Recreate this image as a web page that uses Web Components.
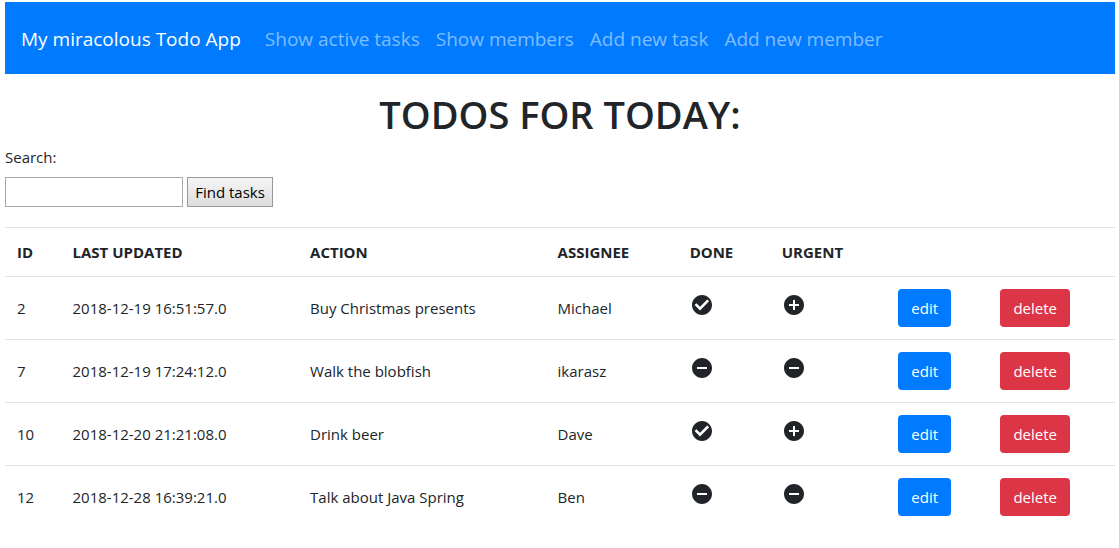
<!DOCTYPE html>
<html lang="en">
<head>
<meta charset="utf-8">
<title>My miracolous Todo App</title>
<style>
  body {
    margin: 2px 4px 0 5px;
    background: #fff;
    color: #212529;
    font: 15px/24px "Open Sans", "Noto Sans", sans-serif;
  }
</style>
</head>
<body>
<todo-app></todo-app>

<script>
  const define = (name, html, setup) => {
    const template = document.createElement('template');
    template.innerHTML = html;
    customElements.define(name, class extends HTMLElement {
      constructor() {
        super();
        this.attachShadow({ mode: 'open' }).append(template.content.cloneNode(true));
      }
      connectedCallback() {
        if (setup) setup(this, this.shadowRoot);
      }
    });
  };

  define('nav-link', `
    <style>
      :host { display: block; }
      a { display: block; padding: 8px; color: rgba(255, 255, 255, .5); text-decoration: none; }
      a:hover { color: rgba(255, 255, 255, .75); }
    </style>
    <a href="#"><slot></slot></a>`);

  define('nav-bar', `
    <style>
      :host { display: block; background: #007bff; font-size: 19px; line-height: 30px; }
      nav { display: flex; flex-wrap: wrap; align-items: center; padding: 14px 16px 12px; }
      .brand { margin-right: 16px; color: #fff; text-decoration: none; }
    </style>
    <nav><a class="brand" href="#"><slot name="brand"></slot></a><slot></slot></nav>`);

  define('task-search', `
    <style>
      :host { display: block; }
      label { display: block; margin-bottom: 8px; }
      .controls { display: flex; gap: 4px; }
      input, button { box-sizing: border-box; height: 30px; border: 1px solid #a9a9a9; font: inherit; }
      input { width: 178px; padding: 1px; }
      button { width: 86px; padding: 0; border-color: #999; background: linear-gradient(#f6f6f6, #dcdcdc); color: #000; white-space: nowrap; }
    </style>
    <form>
      <label for="query">Search:</label>
      <div class="controls"><input id="query" type="text"><button type="button">Find tasks</button></div>
    </form>`);

  const shapes = {
    check: 'M12 2C6.48 2 2 6.48 2 12s4.48 10 10 10 10-4.48 10-10S17.52 2 12 2zm-2 15.4l-5.4-5.4L6.4 10.2 10 13.8l7.2-7.3L19.1 8.300z',
    plus: 'M12 2C6.48 2 2 6.48 2 12s4.48 10 10 10 10-4.48 10-10S17.52 2 12 2zm5 11h-4v4h-2v-4H7v-2h4V7h2v4h4v2z',
    minus: 'M12 2C6.48 2 2 6.48 2 12s4.48 10 10 10 10-4.48 10-10S17.52 2 12 2zm5 11H7v-2h10v2z'
  };

  define('state-icon', `
    <style>
      :host { display: block; width: 24px; height: 24px; }
      svg { display: block; fill: currentColor; }
    </style>
    <svg width="24" height="24" viewBox="0 0 24 24" aria-hidden="true"><path></path></svg>`,
    (host, root) => root.querySelector('path').setAttribute('d', shapes[host.getAttribute('shape')]));

  define('action-button', `
    <style>
      :host { display: block; }
      button {
        display: block; box-sizing: border-box; height: 38px; padding: 0 13px;
        border: 0; border-radius: 4px; background: #007bff; color: #fff; font: inherit; cursor: pointer;
      }
      :host([kind="danger"]) button { background: #dc3545; }
    </style>
    <button type="button"><slot></slot></button>`);

  const tasks = [
    [2, '2018-12-19 16:51:57.0', 'Buy Christmas presents', 'Michael', true, true],
    [7, '2018-12-19 17:24:12.0', 'Walk the blobfish', 'ikarasz', false, false],
    [10, '2018-12-20 21:21:08.0', 'Drink beer', 'Dave', true, true],
    [12, '2018-12-28 16:39:21.0', 'Talk about Java Spring', 'Ben', false, false]
  ];

  define('task-table', `
    <style>
      :host { display: block; }
      table { width: 100%; table-layout: fixed; border-collapse: separate; border-spacing: 0; }
      th, td { padding: 12px 0 12px 12px; border-top: 1px solid #dee2e6; text-align: left; vertical-align: middle; }
      td.state { padding-top: 16px; vertical-align: top; }
      .id { width: 5%; } .updated { width: 21.4%; } .action { width: 22.3%; } .assignee { width: 11.9%; }
      .done { width: 8.3%; } .urgent { width: 10.5%; } .edit { width: 9.2%; }
    </style>
    <table>
      <colgroup><col class="id"><col class="updated"><col class="action"><col class="assignee"><col class="done"><col class="urgent"><col class="edit"><col></colgroup>
      <thead><tr><th>ID</th><th>LAST UPDATED</th><th>ACTION</th><th>ASSIGNEE</th><th>DONE</th><th>URGENT</th><th></th><th></th></tr></thead>
      <tbody></tbody>
    </table>`,
    (host, root) => {
      root.querySelector('tbody').innerHTML = tasks.map(([id, updated, action, assignee, done, urgent]) => `
        <tr>
          <td>${id}</td><td>${updated}</td><td>${action}</td><td>${assignee}</td>
          <td class="state"><state-icon shape="${done ? 'check' : 'minus'}"></state-icon></td>
          <td class="state"><state-icon shape="${urgent ? 'plus' : 'minus'}"></state-icon></td>
          <td><action-button>edit</action-button></td>
          <td><action-button kind="danger">delete</action-button></td>
        </tr>`).join('');
    });

  define('todo-app', `
    <style>
      :host { display: block; }
      h1 { margin: 16px 0 7px; font-size: 38px; line-height: 48px; font-weight: 600; text-align: center; }
      task-table { margin-top: 20px; }
    </style>
    <nav-bar>
      <span slot="brand">My miracolous Todo App</span>
      <nav-link>Show active tasks</nav-link>
      <nav-link>Show members</nav-link>
      <nav-link>Add new task</nav-link>
      <nav-link>Add new member</nav-link>
    </nav-bar>
    <main>
      <h1>TODOS FOR TODAY:</h1>
      <task-search></task-search>
      <task-table></task-table>
    </main>`);
</script>
</body>
</html>
